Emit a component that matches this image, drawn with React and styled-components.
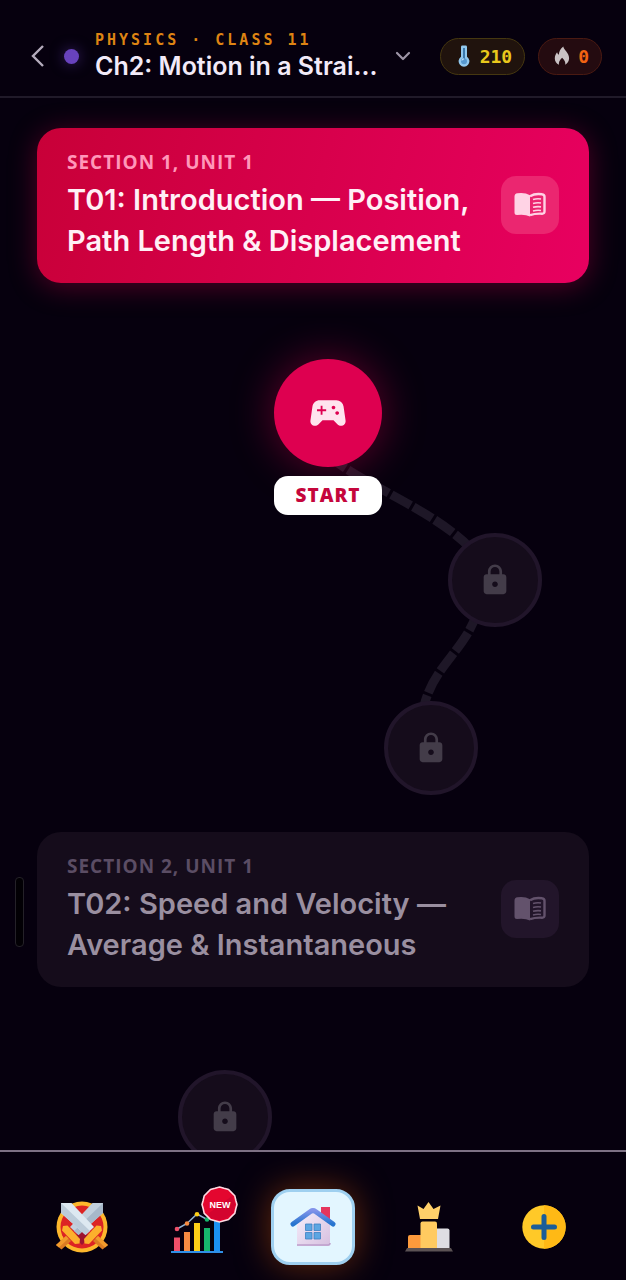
import React from "react";
import styled, { createGlobalStyle, css } from "styled-components";
import { MdLock, MdSportsEsports } from "react-icons/md";

const GlobalStyle = createGlobalStyle`
  * {
    box-sizing: border-box;
  }
  body {
    margin: 0;
    background: #06000e;
    font-family: Inter, "Liberation Sans", sans-serif;
  }
  button {
    font: inherit;
    color: inherit;
    padding: 0;
    border: 0;
    background: none;
    cursor: pointer;
  }
`;

const Screen = styled.div`
  position: relative;
  display: flex;
  flex-direction: column;
  height: 100vh;
`;

const Header = styled.header`
  display: flex;
  align-items: center;
  padding: 30px 24px 14px;
  border-bottom: 2px solid #201a29;
`;

const BackButton = styled.button`
  display: flex;
  justify-content: center;
  width: 28px;
`;

const SubjectDot = styled.span`
  width: 15px;
  height: 15px;
  margin: 0 16px 0 12px;
  border-radius: 50%;
  background: #6842bd;
  box-shadow: 0 0 14px rgba(104, 66, 189, 0.5);
`;

const ChapterButton = styled.button`
  display: flex;
  align-items: center;
  gap: 18px;
  text-align: left;
`;

const ChapterText = styled.span`
  display: flex;
  flex-direction: column;
`;

const Subject = styled.span`
  font-family: "DejaVu Sans Mono", monospace;
  font-size: 15px;
  font-weight: 700;
  line-height: 20px;
  letter-spacing: 3px;
  white-space: nowrap;
  color: #de8413;
`;

const Chapter = styled.span`
  font-size: 25px;
  font-weight: 600;
  line-height: 32px;
  white-space: nowrap;
  color: #f2eaf8;
`;

const Stats = styled.div`
  display: flex;
  gap: 13px;
  margin-left: auto;
`;

const Stat = styled.div`
  display: flex;
  align-items: center;
  gap: 5px;
  height: 37px;
  padding: 0 12px;
  border: 1px solid ${(props) => props.$border};
  border-radius: 19px;
  background: ${(props) => props.$fill};
  color: ${(props) => props.$color};
  font-family: "DejaVu Sans Mono", monospace;
  font-size: 18px;
  font-weight: 700;

  svg {
    width: 22px;
    height: 22px;
  }
`;

const Content = styled.main`
  flex: 1;
  min-height: 0;
  padding: 30px 37px 0;
  overflow-y: auto;
  scrollbar-width: none;
`;

const UnitCard = styled.section`
  display: flex;
  align-items: center;
  justify-content: space-between;
  gap: 16px;
  padding: 21px 30px 22px;
  border-radius: 24px;
  ${(props) =>
    props.$locked
      ? css`
          background: #150c1b;
          color: #9a8fa0;
        `
      : css`
          background: linear-gradient(105deg, #c80038, #e80060);
          box-shadow: 0 4px 28px rgba(224, 0, 80, 0.34);
          color: #fff0f6;
        `}
`;

const UnitLabel = styled.p`
  margin: 0 0 4px;
  font-family: "Open Sans", sans-serif;
  font-size: 19px;
  font-weight: 700;
  line-height: 26px;
  letter-spacing: 1px;
  color: ${(props) => (props.$locked ? "#5b4d64" : "#ff97b9")};
`;

const UnitTitle = styled.h2`
  margin: 0;
  font-size: 29px;
  font-weight: 600;
  line-height: 41px;
`;

const GuideButton = styled.button`
  display: grid;
  flex: none;
  place-items: center;
  width: 58px;
  height: 58px;
  border-radius: 15px;
  background: ${(props) => (props.$locked ? "#22152a" : "#eb2670")};
  color: ${(props) => (props.$locked ? "#63526c" : "#ffd3e5")};
`;

const Path = styled.div`
  position: relative;
  height: ${(props) => props.$height}px;
`;

const Connectors = styled.svg`
  position: absolute;
  top: 0;
  left: calc(50% - 276px);
`;

const Node = styled.button`
  position: absolute;
  top: ${(props) => props.$y}px;
  left: calc(50% + ${(props) => props.$x}px);
  display: grid;
  place-items: center;
  width: 94px;
  height: 94px;
  transform: translateX(-50%);
  border: 4px solid #21152a;
  border-radius: 50%;
  background: #150c1b;
  color: #433c49;
`;

const StartNode = styled(Node)`
  width: 108px;
  height: 108px;
  border: 0;
  background: #de0050;
  box-shadow: 0 0 44px rgba(222, 0, 80, 0.42);
  color: #ffe3ee;
`;

const StartTag = styled.span`
  position: absolute;
  top: ${(props) => props.$y}px;
  left: calc(50% + ${(props) => props.$x}px);
  width: 108px;
  transform: translateX(-50%);
  border-radius: 14px;
  background: #ffffff;
  color: #c5063c;
  font-family: "Open Sans", sans-serif;
  font-size: 19px;
  font-weight: 800;
  line-height: 39px;
  letter-spacing: 1px;
  text-align: center;
`;

const EdgeHandle = styled.span`
  position: absolute;
  top: 877px;
  left: 15px;
  width: 9px;
  height: 70px;
  border: 1px solid #242128;
  border-radius: 4px;
  background: #020004;
`;

const TabBar = styled.nav`
  display: flex;
  padding: 37px 24px 15px;
  border-top: 2px solid #7d7184;
`;

const Tab = styled.button`
  display: grid;
  flex: 1;
  place-items: center;
  height: 76px;
`;

const HomeTile = styled.span`
  display: grid;
  place-items: center;
  width: 84px;
  height: 76px;
  border: 3px solid #9fd0f0;
  border-radius: 19px;
  background: #e3f6ff;
  box-shadow: 0 0 34px rgba(200, 84, 10, 0.5);
`;

const BadgeAnchor = styled.span`
  position: relative;
  display: grid;
  padding-top: 12px;
`;

const NewBadge = styled.span`
  position: absolute;
  top: -14px;
  right: -15px;
  display: grid;
  place-items: center;
  width: 37px;
  height: 37px;
  color: #ffffff;
  font-family: "Liberation Sans", sans-serif;
  font-size: 9px;
  font-weight: 700;

  svg,
  span {
    grid-area: 1 / 1;
  }
`;

const BackIcon = () => (
  <svg width="16" height="24" viewBox="0 0 16 24" fill="none">
    <path d="M13 2 3 12l10 10" stroke="#b5acbd" strokeWidth="2.4" />
  </svg>
);

const ChevronIcon = () => (
  <svg width="16" height="10" viewBox="0 0 16 10" fill="none">
    <path
      d="m2 2 6 6 6-6"
      stroke="#9d94a6"
      strokeWidth="2.2"
      strokeLinecap="round"
      strokeLinejoin="round"
    />
  </svg>
);

const ThermometerIcon = () => (
  <svg viewBox="0 0 22 22">
    <path
      d="M8 2q0-1.4 1.4-1.4h3.2Q14 .6 14 2v9.8a5.4 5.4 0 1 1-6 0Z"
      fill="#91c8ee"
    />
    <path d="M11 3v12" stroke="#3b79ad" strokeWidth="2" />
    <circle cx="11" cy="16.2" r="3" fill="#5698cf" />
    <path d="M9 15.5a2 2 0 0 1 2-1.6" stroke="#d2ecff" fill="none" />
  </svg>
);

const FlameIcon = () => (
  <svg viewBox="0 0 22 22">
    <path
      d="M12.300 1.500c.4 3.500 5.800 6 5.800 11.800 0 2.900-1.500 5.200-3.900 6.500.6-2.600-.6-4.600-3.100-7-2.500 2.400-3.700 4.400-3.100 7-2.600-1.200-4.200-3.500-4.200-6.300 0-2.600 1.100-4.600 2.300-6.200.3 1.200.8 2 1.700 2.500.2-3.300 1.600-6.300 4.500-8.300Z"
      fill="#c9c2c4"
    />
  </svg>
);

const BookIcon = () => (
  <svg width="32" height="26" viewBox="0 0 32 26" fill="none">
    <path
      d="M.5 4.500Q.5 1.500 3.500 1.200 11 .2 16 3.200V24.500Q11 22 3 23 .5 23 .5 20.500Z"
      fill="currentColor"
    />
    <path
      d="M16 4.200Q21 1.200 28 2.300q2.500.3 2.500 2.500V19.500q0 2.300-2.500 2.200-7-.3-12 1.500"
      stroke="currentColor"
      strokeWidth="2.400"
    />
    <path
      d="M19 7.500q4-1.200 8-.5M19 11.500q4-1.200 8-.5M19 15.300q4-1.200 8-.5M19 19q4-1.200 8-.5"
      stroke="currentColor"
      strokeWidth="1.700"
    />
  </svg>
);

const BattleIcon = () => (
  <svg width="52" height="52" viewBox="0 0 52 52">
    <circle cx="26" cy="26" r="25.5" fill="#fdb72c" />
    <circle cx="26" cy="26" r="21.5" fill="#dc2424" />
    <path d="M26 28 34 36 26 44 18 36Z" fill="#9d1430" />
    <path d="M47 2H36.5L14 26l8.500 8L47 12Z" fill="#c2d0dd" />
    <path d="M47 2 18 30l4.500 4L47 12Z" fill="#a7b8c9" />
    <path d="M5 2h10.500L38 26l-8.500 8L5 12Z" fill="#dde8f1" />
    <path d="M5 2 34 30l-4.500 4L5 12Z" fill="#bccbd9" />
    <path d="m7 25 4.500-.5L24 38l-.5 4.500-4.500.5L6 29.500Z" fill="#fcb02c" />
    <path d="m45 25-4.500-.5L28 38l.5 4.500 4.500.5 13-13.500Z" fill="#fcb02c" />
    <path d="m10 35 5 5-9.500 8.500L0 44Z" fill="#dc7c22" />
    <path d="m42 35-5 5 9.500 8.500L52 44Z" fill="#dc7c22" />
    <path d="m10 35 2.500 2.500L3 46.500 0 44Z" fill="#f29b2c" />
    <path d="m42 35-2.500 2.500 9.500 9L52 44Z" fill="#f29b2c" />
  </svg>
);

const ChartIcon = () => (
  <svg width="52" height="42" viewBox="0 0 52 42">
    <path d="M3 25.500h6V39H3Z" fill="#ee4f69" />
    <path d="M13 20h6v19h-6Z" fill="#f58b42" />
    <path d="M23 11h6v28h-6Z" fill="#fdce17" />
    <path d="M33 16h6v23h-6Z" fill="#16b56c" />
    <path d="M43 5h6v34h-6Z" fill="#1b91f4" />
    <path d="M0 40h52" stroke="#2f8fe6" strokeWidth="2" />
    <path
      d="M6 17 16 11.500 26 2l10 5.500 9-5"
      fill="none"
      stroke="#8fb4d4"
      strokeWidth="1.500"
    />
    <circle cx="6" cy="17" r="2.300" fill="#ee4f69" />
    <circle cx="16" cy="11.500" r="2.300" fill="#f58b42" />
    <circle cx="26" cy="2.300" r="2.300" fill="#fdce17" />
    <circle cx="36" cy="7.500" r="2.300" fill="#16b56c" />
  </svg>
);

const BadgeShape = () => (
  <svg width="37" height="37" viewBox="0 0 37 37">
    <path
      d="M18.500 1 23 2.300 27.500 3.400 30.600 6.600 33.800 9.800 34.800 14.200 36 18.500 34.800 22.800 33.800 27.300 30.600 30.400 27.500 33.600 23 34.700 18.500 36 14 34.700 9.500 33.600 6.400 30.400 3.200 27.300 2.200 22.800 1 18.500 2.200 14.200 3.200 9.800 6.400 6.600 9.500 3.400 14 2.300Z"
      fill="#e4062f"
      stroke="#ffd9e2"
      strokeWidth="1.600"
    />
    <path d="m7 28 24-18 3 8-2 9-8 6-6 1-8-2Z" fill="#c10230" opacity=".5" />
  </svg>
);

const HomeIcon = () => (
  <svg width="46" height="42" viewBox="0 0 46 42">
    <defs>
      <linearGradient id="homeWall" x1="0" y1="0" x2="1" y2="1">
        <stop offset="0" stopColor="#f6effb" />
        <stop offset="1" stopColor="#d6bfdf" />
      </linearGradient>
      <linearGradient id="homeRoof" x1="0" y1="0" x2="0" y2="1">
        <stop offset="0" stopColor="#8193ea" />
        <stop offset="1" stopColor="#2675cf" />
      </linearGradient>
    </defs>
    <path d="M31 1h9v14l-9-6Z" fill="#e5365d" />
    <path d="M7 17 23 5l17 13v20q0 2-2 2H7Z" fill="url(#homeWall)" />
    <path d="M7 39h31q2 0 2-2" fill="none" stroke="#bd9fcb" strokeWidth="1.500" />
    <path
      d="M3 18 20.500 5.500q2.500-1.800 5 0L43 18"
      fill="none"
      stroke="url(#homeRoof)"
      strokeWidth="5"
      strokeLinecap="round"
    />
    <path
      d="M15.500 18H22v6.500h-6.500ZM24 18h6.500v6.500H24ZM15.500 26.500H22V33h-6.500ZM24 26.500h6.500V33H24Z"
      fill="#5da6e2"
      stroke="#3c80c3"
      strokeWidth=".8"
    />
  </svg>
);

const PodiumIcon = () => (
  <svg width="48" height="50" viewBox="0 0 48 50">
    <path
      d="M12.500 3.500 18.500 7 23.500 0l5 7 7-3.500L33 17H15Z"
      fill="#ffd06a"
    />
    <path d="M3 35q0-2 2-2h11v13H3Z" fill="#fd9a3c" />
    <path d="M32 26.500h10.500q2 0 2 2V46H32Z" fill="#dedde2" />
    <path d="M15.500 21.500q0-2 2-2H30q2 0 2 2V46H15.500Z" fill="#ffca60" />
    <path d="M2 46h44l2 3.500H0Z" fill="#5b5254" />
  </svg>
);

const PlusIcon = () => (
  <svg width="44" height="44" viewBox="0 0 44 44">
    <circle cx="22" cy="22" r="21.700" fill="#ffc928" />
    <path d="M22 .3a21.700 21.700 0 0 1 0 43.400Z" fill="#ffb915" />
    <path
      d="M22 11.500v21M11.500 22h21"
      stroke="#1b5d98"
      strokeWidth="5"
      strokeLinecap="round"
    />
  </svg>
);

function Unit({ label, locked, children }) {
  return (
    <UnitCard $locked={locked}>
      <div>
        <UnitLabel $locked={locked}>{label}</UnitLabel>
        <UnitTitle>{children}</UnitTitle>
      </div>
      <GuideButton $locked={locked} aria-label="Open guide">
        <BookIcon />
      </GuideButton>
    </UnitCard>
  );
}

function LockedNode({ x, y }) {
  return (
    <Node $x={x} $y={y} aria-label="Locked lesson">
      <MdLock size={34} />
    </Node>
  );
}

export default function App() {
  return (
    <Screen>
      <GlobalStyle />
      <Header>
        <BackButton aria-label="Back">
          <BackIcon />
        </BackButton>
        <SubjectDot />
        <ChapterButton>
          <ChapterText>
            <Subject>PHYSICS · CLASS 11</Subject>
            <Chapter>Ch2: Motion in a Strai...</Chapter>
          </ChapterText>
          <ChevronIcon />
        </ChapterButton>
        <Stats>
          <Stat $fill="#20130d" $border="#453710" $color="#e9c81c">
            <ThermometerIcon />
            210
          </Stat>
          <Stat $fill="#240b10" $border="#4a1a12" $color="#f26312">
            <FlameIcon />0
          </Stat>
        </Stats>
      </Header>

      <Content>
        <Unit label="SECTION 1, UNIT 1">
          T01: Introduction — Position,
          <br />
          Path Length &amp; Displacement
        </Unit>
        <Path $height={549}>
          <Connectors width="552" height="549" viewBox="0 0 552 549" fill="none">
            <g stroke="#1e1727" strokeWidth="9" strokeDasharray="22 3">
              <path d="M291 172C323 202 413 232 445 279" />
              <path d="M441 327C429 367 397 382 387 423" />
            </g>
          </Connectors>
          <StartNode $x={15} $y={76} aria-label="Start lesson">
            <MdSportsEsports size={44} />
          </StartNode>
          <StartTag $x={15} $y={193}>
            START
          </StartTag>
          <LockedNode x={182} y={250} />
          <LockedNode x={118} y={418} />
        </Path>
        <Unit label="SECTION 2, UNIT 1" locked>
          T02: Speed and Velocity —
          <br />
          Average &amp; Instantaneous
        </Unit>
        <Path $height={200}>
          <LockedNode x={-88} y={83} />
        </Path>
      </Content>
      <EdgeHandle />

      <TabBar>
        <Tab aria-label="Battle">
          <BattleIcon />
        </Tab>
        <Tab aria-label="Progress">
          <BadgeAnchor>
            <ChartIcon />
            <NewBadge>
              <BadgeShape />
              <span>NEW</span>
            </NewBadge>
          </BadgeAnchor>
        </Tab>
        <Tab aria-label="Home">
          <HomeTile>
            <HomeIcon />
          </HomeTile>
        </Tab>
        <Tab aria-label="Leaderboard">
          <PodiumIcon />
        </Tab>
        <Tab aria-label="Add">
          <PlusIcon />
        </Tab>
      </TabBar>
    </Screen>
  );
}
